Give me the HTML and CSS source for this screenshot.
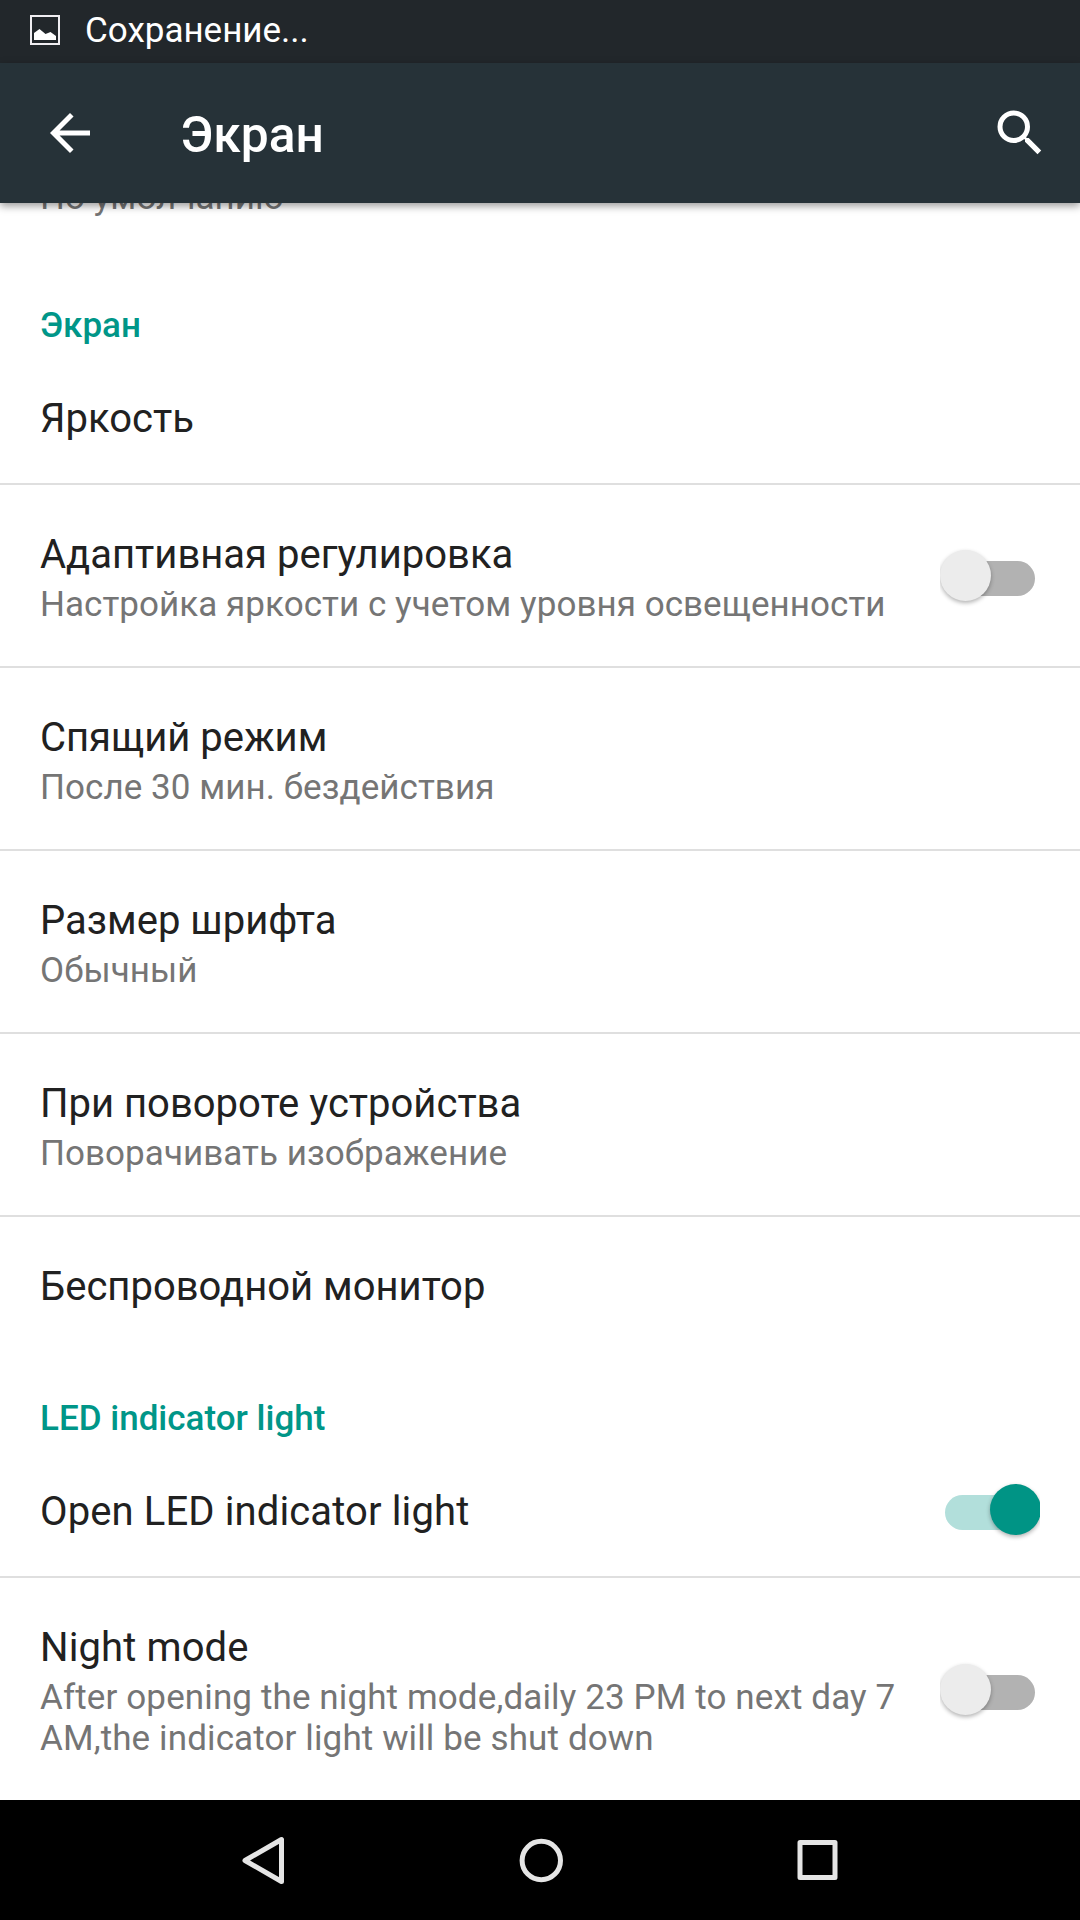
FILE: index.html
```html
<!DOCTYPE html>
<html lang="ru">
<head>
<meta charset="utf-8">
<title>Экран</title>
<link rel="stylesheet" href="styles.css">
</head>
<body>
<div class="status">
<svg width="30" height="30" viewBox="0 0 30 30"><rect x="1" y="1" width="28" height="28" fill="none" stroke="#f0eef2" stroke-width="2"/><path d="M4 25v-7l5.500-4 6 5 5-2 5.500 4v4z" fill="#fff"/></svg>
<span>Сохранение...</span>
</div>
<header class="bar">
<svg width="60" height="60" viewBox="0 0 24 24"><path fill="#fff" d="M20 11H7.830l5.590-5.590L12 4l-8 8 8 8 1.410-1.410L7.830 13H20v-2z"/></svg>
<h1>Экран</h1>
<svg width="60" height="60" viewBox="0 0 24 24"><path fill="#fff" d="M15.500 14h-.79l-.28-.27A6.471 6.471 0 0 0 16 9.500 6.500 6.500 0 1 0 9.500 16c1.610 0 3.090-.59 4.230-1.570l.27.28v.79l5 4.990L20.490 19l-4.990-5zm-6 0a4.500 4.500 0 1 1 0-9 4.500 4.500 0 0 1 0 9z"/></svg>
</header>
<main class="list">
<div class="row partial"><p>По умолчанию</p></div>
<h2>Экран</h2>
<div class="row single"><h3>Яркость</h3></div>
<div class="row line double"><div class="text"><h3>Адаптивная регулировка</h3><p>Настройка яркости с учетом уровня освещенности</p></div><i class="switch"></i></div>
<div class="row line double"><div class="text"><h3>Спящий режим</h3><p>После 30 мин. бездействия</p></div></div>
<div class="row line double"><div class="text"><h3>Размер шрифта</h3><p>Обычный</p></div></div>
<div class="row line double"><div class="text"><h3>При повороте устройства</h3><p>Поворачивать изображение</p></div></div>
<div class="row line wireless"><h3>Беспроводной монитор</h3></div>
<h2>LED indicator light</h2>
<div class="row single"><h3 class="latin">Open LED indicator light</h3><i class="switch on"></i></div>
<div class="row line triple"><div class="text latin"><h3>Night mode</h3><p>After opening the night mode,daily 23 PM to next day 7<br>AM,the indicator light will be shut down</p></div><i class="switch"></i></div>
</main>
<nav class="nav">
<svg width="680" height="120" viewBox="0 0 680 120" fill="none" stroke="#e5e5e5" stroke-width="5" stroke-linejoin="round"><path d="M81.500 39.500v42L45 60.500z"/><circle cx="341.300" cy="60.500" r="19.200"/><rect x="600" y="42.500" width="35" height="35"/></svg>
</nav>
</body>
</html>
```
FILE: styles.css
```css
*{box-sizing:border-box}
body,h1,h2,h3,p{margin:0}
body{width:1080px;height:1920px;overflow:hidden;display:flex;flex-direction:column;background:#fff;font-family:Roboto,sans-serif}
.status{height:63px;flex:none;background:#22272b;color:#fff;display:flex;align-items:center;padding:0 0 3px 30px;font-size:35px;line-height:41px}
.status span{margin-left:25px}
.bar{height:140px;flex:none;background:#263238;color:#fff;display:flex;align-items:center;padding:0 30px 0 40px;position:relative;z-index:1;box-shadow:0 3px 8px rgba(0,0,0,.4)}
h1{font-size:49.7px;line-height:58px;font-weight:500;margin-left:80.5px;padding-top:4px;flex:1}
.list{flex:1;overflow:hidden}
.row{display:flex;align-items:center;justify-content:space-between;padding:0 40px}
.partial{height:61px;align-items:flex-start}
.partial p{margin-top:-26px}
h2{height:91px;padding:41px 40px 0;font-size:35px;line-height:41px;font-weight:500;color:#009688}
.single{height:128px}
.double{height:183px}
.triple{height:224px}
.wireless{height:142px}
.line{border-top:2px solid #dfdfdf}
h3{font-size:40px;line-height:55px;font-weight:400;color:#212121}
.row>h3{margin-bottom:1px}
p{font-size:35px;line-height:41px;letter-spacing:.05px;color:#757575}
.text{margin-bottom:-1px}
.text p{margin-top:2px}
.latin,.latin p{letter-spacing:.12px}
.switch{width:100px;height:65px;flex:none;position:relative;overflow:hidden}
.switch::before{content:"";position:absolute;left:5px;top:18px;width:90px;height:35px;border-radius:18px;background:#b2b2b2}
.switch::after{content:"";position:absolute;left:-.5px;top:6.5px;width:51px;height:51px;border-radius:50%;background:#ececec;box-shadow:0 2px 4px rgba(0,0,0,.3)}
.single .switch{margin-bottom:5px}
.triple .switch{margin-top:1px}
.on::before{background:#b2dfdb}
.switch.on::after{left:49.5px;background:#009485}
.nav{height:120px;flex:none;background:#000;padding-left:200px}
```
